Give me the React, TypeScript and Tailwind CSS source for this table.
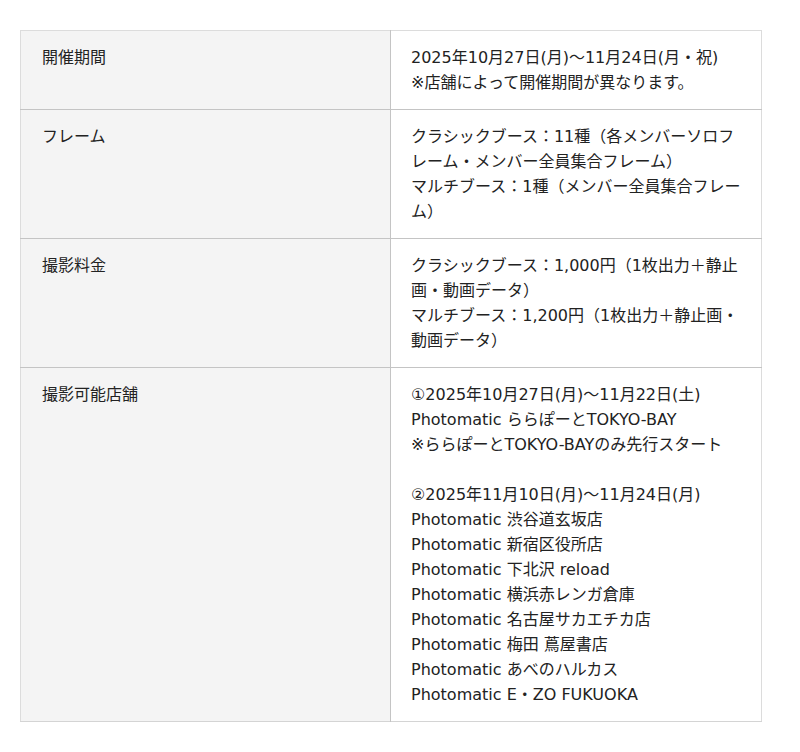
import React from "react";

const rows: { label: string; lines: string[] }[] = [
  {
    label: "開催期間",
    lines: ["2025年10月27日(月)～11月24日(月・祝)", "※店舗によって開催期間が異なります。"],
  },
  {
    label: "フレーム",
    lines: [
      "クラシックブース：11種（各メンバーソロフレーム・メンバー全員集合フレーム）",
      "マルチブース：1種（メンバー全員集合フレーム）",
    ],
  },
  {
    label: "撮影料金",
    lines: [
      "クラシックブース：1,000円（1枚出力＋静止画・動画データ）",
      "マルチブース：1,200円（1枚出力＋静止画・動画データ）",
    ],
  },
  {
    label: "撮影可能店舗",
    lines: [
      "①2025年10月27日(月)～11月22日(土)",
      "Photomatic ららぽーとTOKYO-BAY",
      "※ららぽーとTOKYO-BAYのみ先行スタート",
      "",
      "②2025年11月10日(月)～11月24日(月)",
      "Photomatic 渋谷道玄坂店",
      "Photomatic 新宿区役所店",
      "Photomatic 下北沢 reload",
      "Photomatic 横浜赤レンガ倉庫",
      "Photomatic 名古屋サカエチカ店",
      "Photomatic 梅田 蔦屋書店",
      "Photomatic あべのハルカス",
      "Photomatic E・ZO FUKUOKA",
    ],
  },
];

export default function App() {
  return (
    <div
      className="bg-white min-h-[752px] pt-[30px] pl-[20px] text-[#222] text-[16px] leading-[25px]"
      style={{ fontFamily: '"DejaVu Sans", "Noto Sans CJK JP", sans-serif' }}
    >
      <table className="w-[742px] border-collapse table-fixed border border-[#dcdcdc]">
        <tbody>
          {rows.map((r, i) => (
            <tr key={i} className="border-b border-[#c4c4c4] last:border-[#d4d4d4]">
              <th className="w-[370px] bg-[#f4f4f4] font-normal text-left align-top pt-[14px] pb-[14px] pl-[21px] pr-[20px] border-r border-[#c4c4c4]">
                {r.label}
              </th>
              <td className="align-top pt-[14px] pb-[14px] pl-[20px] pr-[20px] bg-white">
                {r.lines.map((l, j) => (
                  <div key={j} className="min-h-[25px]">
                    {l}
                  </div>
                ))}
              </td>
            </tr>
          ))}
        </tbody>
      </table>
    </div>
  );
}
